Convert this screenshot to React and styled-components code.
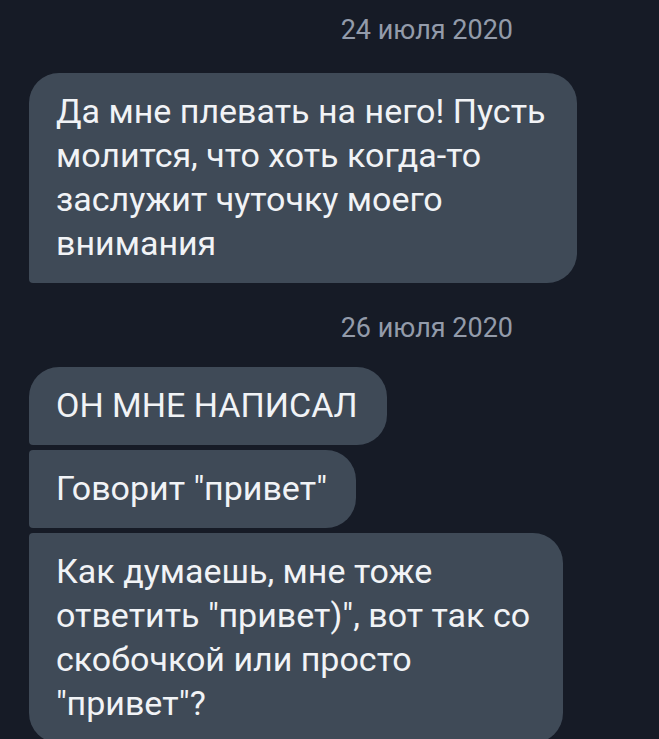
import React from 'react'
import styled, { createGlobalStyle } from 'styled-components'

const GlobalStyle = createGlobalStyle`
  html, body {
    margin: 0;
    padding: 0;
    background: #161b26;
  }
  body {
    font-family: Roboto, "Noto Sans", "Liberation Sans", sans-serif;
    -webkit-font-smoothing: antialiased;
  }
`;

const Page = styled.div`
  width: 659px;
  height: 739px;
  overflow: hidden;
  background: #161b26;
  display: flex;
  flex-direction: column;
  padding: 15px 0 0 29px;
  box-sizing: border-box;
`;

const DateLabel = styled.div`
  align-self: flex-end;
  margin-right: 146px;
  font-size: 27px;
  line-height: 30px;
  color: #939baa;
  margin-top: ${({ $top }) => $top || 0}px;
`;

const Group = styled.div`
  display: flex;
  flex-direction: column;
  align-items: flex-start;
  gap: 5px;
  margin-top: ${({ $top }) => $top || 0}px;
`;

const radius = {
  single: '30px 30px 30px 4px',
  first: '30px 30px 30px 4px',
  middle: '4px 30px 30px 4px',
  last: '4px 30px 30px 30px',
};

const Bubble = styled.div`
  box-sizing: border-box;
  width: ${({ $width }) => ($width ? `${$width}px` : 'auto')};
  padding: 16px 29px 18px 27px;
  background: #3f4a57;
  color: #f1f3f6;
  font-size: 34px;
  line-height: 44px;
  border-radius: ${({ $pos }) => radius[$pos || 'single']};
`;

const App = () => {
  return (
    <>
      <GlobalStyle />
      <Page>
        <DateLabel>24 июля 2020</DateLabel>
        <Group $top={28}>
          <Bubble $width={548}>
            Да мне плевать на него! Пусть молится, что хоть когда-то заслужит чуточку моего внимания
          </Bubble>
        </Group>
        <DateLabel $top={30}>26 июля 2020</DateLabel>
        <Group $top={24}>
          <Bubble $pos="first">ОН МНЕ НАПИСАЛ</Bubble>
          <Bubble $pos="middle">Говорит "привет"</Bubble>
          <Bubble $pos="last" $width={534}>
            Как думаешь, мне тоже ответить "привет)", вот так со скобочкой или просто "привет"?
          </Bubble>
        </Group>
      </Page>
    </>
  )
}

export default App
